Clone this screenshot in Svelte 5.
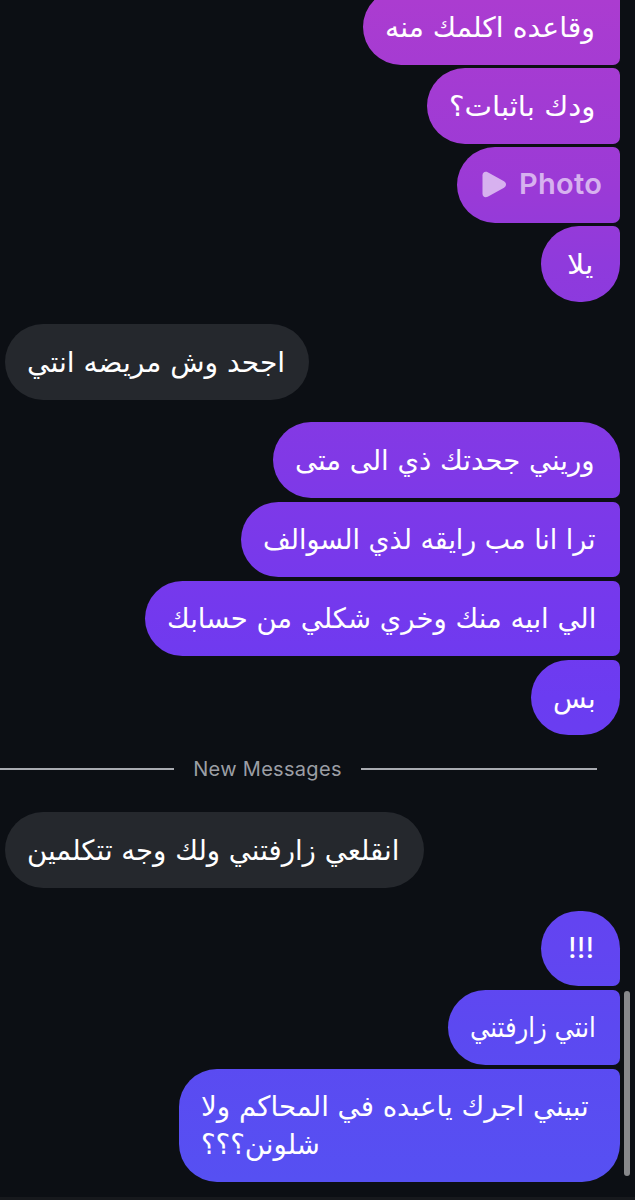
<script>
    const thread = [
        {
            from: 'me',
            continued: true,
            messages: [
                { text: 'وقاعده اكلمك منه', width: 257, textWidth: 210 },
                { text: 'ودك باثبات؟', width: 193, textWidth: 146 },
                { text: 'Photo', width: 163, photo: true },
                { text: 'يلا', width: 79, textWidth: 27 },
            ],
        },
        {
            from: 'them',
            messages: [{ text: 'اجحد وش مريضه انتي', width: 304, textWidth: 258 }],
        },
        {
            from: 'me',
            messages: [
                { text: 'وريني جحدتك ذي الى متى', width: 347, textWidth: 300 },
                { text: 'ترا انا مب رايقه لذي السوالف', width: 379, textWidth: 333 },
                { text: 'الي ابيه منك وخري شكلي من حسابك', width: 475, textWidth: 429 },
                { text: 'بس', width: 89, textWidth: 43 },
            ],
        },
        { divider: 'New Messages' },
        {
            from: 'them',
            messages: [{ text: 'انقلعي زارفتني ولك وجه تتكلمين', width: 419, textWidth: 372 }],
        },
        {
            from: 'me',
            messages: [
                { text: '!!!', width: 79, textWidth: 26 },
                { text: 'انتي زارفتني', width: 172, textWidth: 126 },
                {
                    lines: [
                        { text: 'تبيني اجرك ياعبده في المحاكم ولا', textWidth: 388 },
                        { text: 'شلونن؟؟؟', textWidth: 119 },
                    ],
                    width: 441,
                },
            ],
        },
    ];

    // squeeze or stretch a line so it fills the width its bubble was sized for
    function fit(node, target) {
        node.style.transform = `scaleX(${target / node.offsetWidth})`;
    }
</script>

<div class="chat">
    {#each thread as group}
        {#if group.divider}
            <div class="divider">
                <span class="rule left"></span>
                <span class="label">{group.divider}</span>
                <span class="rule right"></span>
            </div>
        {:else}
            <div class="group {group.from}" class:continued={group.continued}>
                {#each group.messages as message}
                    <div
                        class="bubble"
                        class:photo={message.photo}
                        class:short={message.width < 80}
                        style="width: {message.width}px"
                    >
                        {#if message.photo}
                            <svg width="25" height="27" viewBox="0 0 25 27">
                                <path d="M0.5 4.2C0.5 1.2 3 0 5.7 1.2L22 10.3C24.7 12 24.7 15 22 16.7L5.7 25.8C3 27 0.5 25.8 0.5 22.8Z" fill="currentColor" />
                            </svg>
                            <span>{message.text}</span>
                        {:else}
                            {#each message.lines || [message] as line}
                                <div class="line" style="width: {line.textWidth}px">
                                    <span class="text" dir="rtl" use:fit={line.textWidth}>{line.text}</span>
                                </div>
                            {/each}
                        {/if}
                    </div>
                {/each}
            </div>
        {/if}
    {/each}

    <div class="composer"></div>
    <div class="scrollbar"></div>
</div>

<style>
    :global(body) {
        background: #0c0f14;
        overflow: hidden;
    }

    .chat {
        position: relative;
        box-sizing: border-box;
        width: 635px;
        height: 1200px;
        overflow: hidden;
        display: flex;
        flex-direction: column;
        background: #0c0f14;
        color: #fff;
        font-family: Inter, sans-serif;
    }

    .group {
        flex: none;
        display: flex;
        flex-direction: column;
        gap: 3.6px;
        margin-bottom: 22.6px;
        padding: 0 15px 0 5px;
    }

    .group:first-child {
        margin-top: -11px;
    }

    .me {
        align-items: flex-end;
    }

    .them {
        align-items: flex-start;
    }

    .bubble {
        box-sizing: border-box;
        flex: none;
        display: flex;
        flex-direction: column;
        justify-content: center;
        min-height: 75.5px;
        padding: 2px 24px 0 22px;
        border-radius: 38px;
        background: #25282d;
        font-size: 27px;
    }

    .me .bubble {
        border-radius: 38px 7px 7px 38px;
        background: linear-gradient(180deg, #ab3cd0 0, #9b3ad6 185px, #8f3adc 264px, #8139e6 460px, #7339ee 618px, #6b3cf1 697px, #6245f1 948px, #5c49f1 1027px, #5650f2 1180px) 0 0 / 635px 1200px fixed;
    }

    .me:not(.continued) .bubble:first-child {
        border-top-right-radius: 38px;
    }

    .me .bubble:last-child {
        border-bottom-right-radius: 38px;
    }

    .me .bubble.short {
        align-items: center;
        padding: 0;
    }

    .bubble:has(.line + .line) {
        height: 113.5px;
    }

    .line {
        height: 38px;
        line-height: 38px;
        white-space: nowrap;
    }

    .text {
        display: inline-block;
        font-family: "DejaVu Sans", sans-serif;
        font-size: 28px;
        transform-origin: 0 50%;
    }

    .short .text {
        font-family: Inter, "DejaVu Sans", sans-serif;
    }

    .bubble.photo {
        flex-direction: row;
        align-items: center;
        justify-content: flex-start;
        gap: 12px;
        padding: 0 0 1px 25px;
        color: #d7b1ef;
        font-weight: 600;
        font-size: 29px;
        letter-spacing: 0.3px;
    }

    .photo span {
        margin-top: -2px;
    }

    .divider {
        flex: none;
        display: flex;
        align-items: center;
        height: 22px;
        margin: -0.3px 0 32.9px;
        font-size: 20px;
        color: #9b9ea4;
    }

    .label {
        width: 187px;
        text-align: center;
        letter-spacing: 0.3px;
    }

    .rule {
        height: 2px;
        background: #a9abb1;
    }

    .rule.left {
        width: 174px;
    }

    .rule.right {
        width: 236px;
    }

    .composer {
        position: absolute;
        left: 0;
        bottom: 0;
        width: 635px;
        height: 3px;
        background: #17191d;
    }

    .scrollbar {
        position: absolute;
        top: 991px;
        left: 624px;
        width: 5.5px;
        height: 185px;
        border-radius: 3px;
        background: #87888b;
    }
</style>
